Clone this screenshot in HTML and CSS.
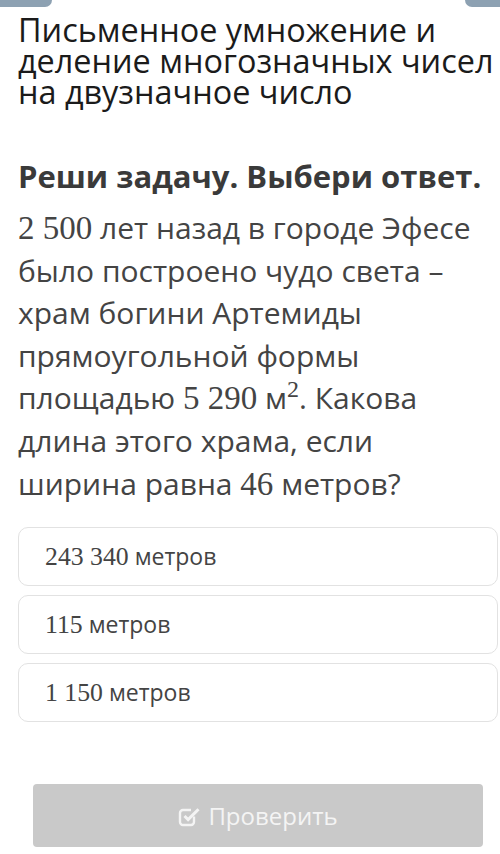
FILE: index.html
```html
<!DOCTYPE html>
<html lang="ru">
<head>
    <meta charset="UTF-8">
    <meta name="viewport" content="width=device-width, initial-scale=1.0">
    <title>Письменное умножение и деление</title>
    <link rel="stylesheet" href="styles.css">
</head>
<body>
    <div class="top-strip">
        <span class="tab tab-left"></span>
        <span class="tab tab-right"></span>
    </div>
    <main class="task">
        <h1 class="task-title">Письменное умножение и деление многозначных чисел на двузначное число</h1>

        <h2 class="task-header">Реши задачу. Выбери ответ.</h2>
        <p class="task-text">
            <span class="math">2 500</span> лет назад в городе Эфесе было построено чудо света – храм богини Артемиды прямоугольной формы площадью <span class="math">5 290</span> м<sup class="math">2</sup>. Какова длина этого храма, если ширина равна <span class="math">46</span> метров?
        </p>

        <div class="answers">
            <div class="answer"><span class="math">243 340</span> метров</div>
            <div class="answer"><span class="math">115</span> метров</div>
            <div class="answer"><span class="math">1 150</span> метров</div>
        </div>

        <button class="check-btn" disabled>
            <svg class="check-icon" width="23" height="22" viewBox="0 0 23 22">
                <path d="M16 11.5v5.5a3 3 0 0 1-3 3H5a3 3 0 0 1-3-3V8a3 3 0 0 1 3-3h8" fill="none" stroke="#f4f4f4" stroke-width="2.4"/>
                <path d="M6.5 11l3.6 3.6L20.5 4.2" fill="none" stroke="#f4f4f4" stroke-width="3"/>
            </svg>
            Проверить
        </button>
    </main>
</body>
</html>
```

FILE: styles.css
```css
body {
    margin: 0;
    padding: 0;
    background: #fff;
    font-family: "Open Sans", sans-serif;
    color: #444;
}

.top-strip {
    display: flex;
    justify-content: space-between;
    height: 7px;
}

.tab {
    display: block;
    height: 7px;
    background: #8da1b2;
}

.tab-left {
    width: 52px;
    border-bottom-right-radius: 7px;
}

.tab-right {
    width: 35px;
    border-bottom-left-radius: 7px;
}

.task {
    padding: 0 2px 0 18px;
}

.task-title {
    margin: 7px 0 0;
    font-size: 32.4px;
    line-height: 31px;
    font-weight: 400;
    color: #1b1b1b;
}

.task-header {
    margin: 52px 0 0;
    font-size: 31px;
    line-height: 34px;
    font-weight: 700;
    color: #3a3a3a;
}

.task-text {
    margin: 14px 0 0;
    font-size: 30px;
    line-height: 42.6px;
}

.math {
    font-family: "Liberation Serif", serif;
    font-size: 1.1em;
    line-height: 1;
}

sup.math {
    font-size: 0.8em;
    vertical-align: 0.5em;
}

.answers {
    display: flex;
    flex-direction: column;
    gap: 9px;
    margin-top: 22px;
}

.answer {
    height: 57px;
    line-height: 57px;
    padding-left: 26px;
    border: 1px solid #e2e2e2;
    border-radius: 10px;
    font-size: 23px;
    color: #444;
}

.answer .math {
    font-size: 1.12em;
}

.check-btn {
    display: flex;
    align-items: center;
    justify-content: center;
    gap: 7px;
    width: 450px;
    height: 63px;
    margin: 62px 0 0 15px;
    border: none;
    border-radius: 4px;
    background: #c9c9c9;
    color: #f4f4f4;
    font-family: "Open Sans", sans-serif;
    font-size: 24px;
}
```
